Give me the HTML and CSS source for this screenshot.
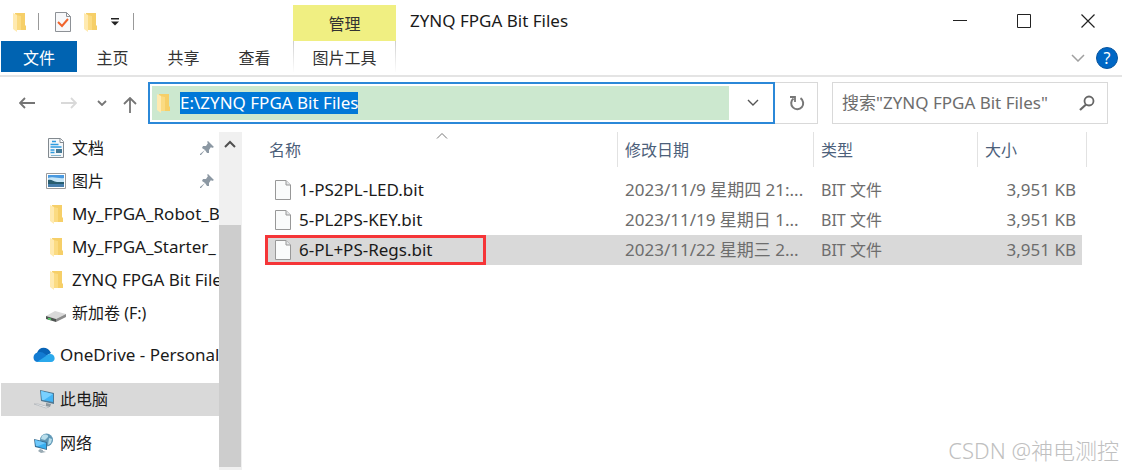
FILE: index.html
```html
<!DOCTYPE html>
<html lang="zh-CN">
<head>
    <meta charset="UTF-8">
    <meta name="viewport" content="width=device-width, initial-scale=1.0">
    <title>ZYNQ FPGA Bit Files</title>
    <link rel="stylesheet" href="styles.css">
</head>
<body>

<!-- Shared icons -->
<svg class="icon-defs" width="0" height="0" aria-hidden="true">
    <symbol id="icon-folder" viewBox="0 0 14 20">
        <path d="M3 1h10v12l1 1v4H4z" fill="#f6cf68"/>
        <path d="M4 18V3l5 1v14z" fill="#fbdb82"/>
        <path d="M1 1l4 2v17l-4-3z" fill="#ffeab0"/>
    </symbol>
    <symbol id="icon-file" viewBox="0 0 16 20">
        <path d="M.5.5h10.500l4.500 4.500v14.500H.5z" fill="#fafbfb" stroke="#989898"/>
        <path d="M11 .5v4.500h4.500" fill="#e4e6e8" stroke="#989898"/>
    </symbol>
    <symbol id="icon-pin" viewBox="0 0 14 14">
        <path d="M8 0l6 6-2 1-1-1-2 3v3l-2 0-2-3-4 5-1 0 0-1 5-4-3-2 1-2h3l2-3-1-1z" fill="#8c98a3"/>
    </symbol>
    <symbol id="icon-down" viewBox="0 0 14 8">
        <path d="M1 1l6 6 6-6" fill="none" stroke="currentColor" stroke-width="1.5"/>
    </symbol>
</svg>

<div class="window">
    <header class="ribbon">
        <div class="ribbon-left">
            <div class="quick-access">
                <svg class="folder" aria-hidden="true"><use href="#icon-folder"/></svg>
                <span class="divider"></span>
                <button class="icon-btn check" aria-label="属性">
                    <svg width="16" height="20" viewBox="0 0 16 20"><path d="M.5.5h11l4 4v15H.5z" fill="#f7f8fa" stroke="#8d9196"/><path d="M11.500.5v4h4" fill="none" stroke="#8d9196"/><path d="M3 10l4 4 6-7" fill="none" stroke="#f0642c" stroke-width="2"/></svg>
                </button>
                <button class="icon-btn" aria-label="新建文件夹">
                    <svg class="folder"><use href="#icon-folder"/></svg>
                </button>
                <button class="icon-btn customize" aria-label="自定义快速访问工具栏">
                    <svg width="8" height="8" viewBox="0 0 8 8"><path d="M0 0h8v1.500H0zM0 3.500h8L4 7.500z" fill="#222"/></svg>
                </button>
                <span class="divider"></span>
            </div>
            <nav class="tabs">
                <button class="tab file">文件</button>
                <button class="tab">主页</button>
                <button class="tab">共享</button>
                <button class="tab">查看</button>
            </nav>
        </div>

        <div class="context-tab">
            <div class="context-title">管理</div>
            <button class="tab">图片工具</button>
        </div>

        <div class="ribbon-right">
            <div class="title-row">
                <h1>ZYNQ FPGA Bit Files</h1>
                <div class="window-buttons">
                    <button class="icon-btn" aria-label="最小化"><svg width="14" height="14" viewBox="0 0 14 14"><path d="M0 6.500h14" stroke="#222"/></svg></button>
                    <button class="icon-btn" aria-label="最大化"><svg width="14" height="14" viewBox="0 0 14 14"><path d="M.5.5h13v13H.5z" fill="none" stroke="#222"/></svg></button>
                    <button class="icon-btn" aria-label="关闭"><svg width="14" height="14" viewBox="0 0 14 14"><path d="M.5.5l13 13M13.500.5l-13 13" stroke="#222" stroke-width="1.200"/></svg></button>
                </div>
            </div>
            <div class="help-row">
                <button class="icon-btn expand" aria-label="展开功能区"><svg width="14" height="8"><use href="#icon-down"/></svg></button>
                <button class="help" aria-label="帮助">?</button>
            </div>
        </div>
    </header>

    <!-- Navigation and address bar -->
    <div class="toolbar">
        <div class="history">
            <button class="icon-btn" aria-label="返回"><svg width="16" height="12" viewBox="0 0 16 12"><path d="M16 6H1M6 1L1 6l5 5" fill="none" stroke="#757575" stroke-width="1.800"/></svg></button>
            <button class="icon-btn forward" aria-label="前进"><svg width="16" height="12" viewBox="0 0 16 12"><path d="M0 6h15M10 1l5 5-5 5" fill="none" stroke="#d9d9d9" stroke-width="1.800"/></svg></button>
            <button class="icon-btn recent" aria-label="最近位置"><svg width="10" height="6" viewBox="0 0 10 6"><path d="M1 1l4 4 4-4" fill="none" stroke="#757575" stroke-width="1.800"/></svg></button>
            <button class="icon-btn up" aria-label="向上"><svg width="14" height="16" viewBox="0 0 14 16"><path d="M7 16V1M1 7l6-6 6 6" fill="none" stroke="#757575" stroke-width="1.800"/></svg></button>
        </div>
        <div class="address">
            <div class="address-field">
                <svg class="folder" aria-hidden="true"><use href="#icon-folder"/></svg>
                <input type="text" id="path" aria-label="地址" value="E:\ZYNQ FPGA Bit Files" spellcheck="false">
            </div>
            <button class="icon-btn dropdown" aria-label="以前的位置"><svg width="12" height="8" viewBox="0 0 12 8"><path d="M1 1l5 5 5-5" fill="none" stroke="#555" stroke-width="1.400"/></svg></button>
        </div>
        <button class="icon-btn refresh" aria-label="刷新">
            <svg width="18" height="18" viewBox="0 0 18 18"><path d="M12.500 4.200a6 6 0 1 1-7 .3" fill="none" stroke="#777" stroke-width="2"/><path d="M2 3h5v5" fill="none" stroke="#777" stroke-width="1.800"/></svg>
        </button>
        <div class="search">
            <input type="text" aria-label="搜索" placeholder='搜索"ZYNQ FPGA Bit Files"'>
            <button class="icon-btn" aria-label="开始搜索"><svg width="16" height="16" viewBox="0 0 16 16"><circle cx="10" cy="6" r="4.500" fill="none" stroke="#666" stroke-width="1.800"/><path d="M7 9.500L1 15" stroke="#666" stroke-width="2.200"/></svg></button>
        </div>
    </div>

    <main class="content">
        <nav class="sidebar">
            <ul>
                <li><a href="#">
                    <svg width="16" height="20" viewBox="0 0 16 20"><path d="M.5.500h12l3 3v16H.5z" fill="#f4f7f9" stroke="#82898f"/><path d="M12 .5v4h4" fill="#fff" stroke="#82898f"/><path d="M4 3.500h4M2.500 6.500h8M2.500 9h11M2.500 12h4M2.500 14.500h4" stroke="#2d9be0" stroke-width="1.500"/><path d="M8 11h6v4H8z" fill="#447996"/><path d="M3 17.500h10" stroke="#83b5d1"/></svg>
                    <span>文档</span>
                    <svg class="pin" width="14" height="14"><use href="#icon-pin"/></svg>
                </a></li>
                <li><a href="#">
                    <svg width="20" height="16" viewBox="0 0 20 16"><path d="M.5.500h19v15H.5z" fill="#fff" stroke="#9a9a9a"/><path d="M2 2h16v12H2z" fill="#4a9ae0"/><path d="M2 5c5-2 11 1 16 0v6H2z" fill="#c7e6f7"/><path d="M2 7c4-1 5 2 9 2l7 0v3H2z" fill="#285d70"/><path d="M2 11h16v3H2z" fill="#477eac"/></svg>
                    <span>图片</span>
                    <svg class="pin" width="14" height="14"><use href="#icon-pin"/></svg>
                </a></li>
                <li><a href="#"><svg class="folder"><use href="#icon-folder"/></svg><span class="latin">My_FPGA_Robot_B</span></a></li>
                <li><a href="#"><svg class="folder"><use href="#icon-folder"/></svg><span class="latin">My_FPGA_Starter_</span></a></li>
                <li><a href="#"><svg class="folder"><use href="#icon-folder"/></svg><span class="latin">ZYNQ FPGA Bit File</span></a></li>
                <li><a href="#">
                    <svg width="20" height="20" viewBox="0 0 20 20"><path d="M0 13l9-5 11 3-10 5z" fill="#d9d9d9"/><path d="M0 13l10 3v3L0 16z" fill="#4e5350"/><path d="M10 16l10-5v3l-10 5z" fill="#8b8b8b"/><path d="M2 15.500l3 1" stroke="#55d36b" stroke-width="1.500"/></svg>
                    <span>新加卷 (F:)</span>
                </a></li>
            </ul>
            <ul class="roots">
                <li><a href="#">
                    <svg width="22" height="16" viewBox="0 0 22 16"><path d="M4 6C6-1 15-1 18 6L9 11z" fill="#0864b7"/><path d="M5 15C-1 15-1 6 5 5.500c3-1 5 0 7 1.500l6 5-8 3z" fill="#127bd2"/><path d="M4 15l9-6c1-1 2-2 4-2 6 0 6 8 1 8z" fill="#2ba9ec"/></svg>
                    <span class="latin">OneDrive - Personal</span>
                </a></li>
                <li class="current"><a href="#">
                    <svg width="22" height="20" viewBox="0 0 22 20"><path d="M7 1l14 3v11L8 12z" fill="#4f7893"/><path d="M8 2l12 3v8L9 11z" fill="#43b4f5"/><path d="M8 2l12 3-9 6H9z" fill="#79d0ff"/><path d="M13 14l5 1-1 3-4-1z" fill="#8d989f"/><path d="M1 15l12 4 3-1-11-3z" fill="#eceff1" stroke="#a8adb1" stroke-width=".6"/></svg>
                    <span>此电脑</span>
                </a></li>
                <li><a href="#">
                    <svg width="22" height="20" viewBox="0 0 22 20"><circle cx="13.500" cy="7" r="6.500" fill="#6098b6"/><path d="M9 3c3-3 7-1 6 1l-3 3-4-1zM16 5l3 1-1 4-3 2z" fill="#b9deeb"/><path d="M1 6l13 3v8L2 14z" fill="#3c7195"/><path d="M2 7l11 3v6L3 13z" fill="#38aeef"/><path d="M2 7l11 3-8 3H3z" fill="#70c9fb"/><path d="M7 16l3 1v1l3 1-5 1-3-2z" fill="#9aabb4"/></svg>
                    <span>网络</span>
                </a></li>
            </ul>
        </nav>
        <div class="scrollbar" aria-hidden="true">
            <svg width="12" height="8" viewBox="0 0 12 8"><path d="M1 7l5-5 5 5" fill="none" stroke="#505050" stroke-width="2"/></svg>
            <div class="thumb"></div>
        </div>

        <section class="files">
            <table>
                <colgroup>
                    <col>
                    <col class="col-date">
                    <col class="col-type">
                    <col class="col-size">
                </colgroup>
                <thead>
                    <tr>
                        <th class="sorted"><div>名称</div><svg width="12" height="6" viewBox="0 0 12 6"><path d="M1 5.500l5-5 5 5" fill="none" stroke="#777"/></svg></th>
                        <th><div>修改日期</div></th>
                        <th><div>类型</div></th>
                        <th><div>大小</div></th>
                    </tr>
                </thead>
                <tbody>
                    <tr>
                        <td><div class="name"><svg width="16" height="20"><use href="#icon-file"/></svg>1-PS2PL-LED.bit</div></td>
                        <td class="latin">2023/11/9 星期四 21:...</td>
                        <td>BIT 文件</td>
                        <td class="size">3,951 KB</td>
                    </tr>
                    <tr>
                        <td><div class="name"><svg width="16" height="20"><use href="#icon-file"/></svg>5-PL2PS-KEY.bit</div></td>
                        <td class="latin">2023/11/19 星期日 1...</td>
                        <td>BIT 文件</td>
                        <td class="size">3,951 KB</td>
                    </tr>
                    <tr class="selected">
                        <td><div class="name marked"><svg width="16" height="20"><use href="#icon-file"/></svg>6-PL+PS-Regs.bit</div></td>
                        <td class="latin">2023/11/22 星期三 2...</td>
                        <td>BIT 文件</td>
                        <td class="size">3,951 KB</td>
                    </tr>
                </tbody>
            </table>
        </section>
    </main>

    <div class="watermark">CSDN @神电测控</div>
</div>

<script>
    // Open with the whole path selected
    const path = document.getElementById('path');
    path.focus();
    path.select();
</script>

</body>
</html>
```
FILE: styles.css
```css
* {
    box-sizing: border-box;
}

body {
    margin: 0;
    background-color: #fff;
    color: #1a1a1a;
    font-family: 'Noto Sans', 'Noto Sans CJK SC', sans-serif;
    font-size: 16px;
    line-height: 22px;
}

button,
input {
    font: inherit;
    color: inherit;
    border: none;
    background: none;
    padding: 0;
    margin: 0;
}

svg {
    display: block;
    flex-shrink: 0;
}

ul {
    list-style: none;
    margin: 0;
    padding: 0;
}

.latin {
    font-size: 17px;
}

.icon-defs {
    position: absolute;
}

.window {
    position: relative;
    display: flex;
    flex-direction: column;
    min-height: 100vh;
    overflow: hidden;
}

.folder {
    width: 14px;
    height: 20px;
}

.icon-btn {
    display: flex;
    align-items: center;
    justify-content: center;
}

/* Ribbon */
.ribbon {
    display: flex;
    height: 77px;
    padding-left: 1px;
    border-bottom: 2px solid #e4e4e4;
}

.ribbon-left {
    width: 292px;
}

.quick-access {
    display: flex;
    align-items: center;
    height: 41px;
    padding: 2px 0 0 11px;
}

.divider {
    width: 1px;
    height: 17px;
    margin-left: 12px;
    background-color: #999;
}

.check {
    margin: 0 12px 0 16px;
}

.customize {
    margin: 0 2px 0 14px;
}

.tabs {
    display: flex;
    padding-right: 3px;
}

.tab {
    flex: 1;
    height: 31px;
    padding-top: 2px;
    color: #333;
}

.tab.file {
    flex: 0 0 76px;
    background-color: #0063b1;
    color: #fff;
}

.context-tab {
    display: flex;
    flex-direction: column;
    width: 103px;
    padding-top: 5px;
}

.context-title {
    height: 36px;
    padding-top: 8px;
    background-color: #f0ef82;
    text-align: center;
    color: #333;
}

.context-tab .tab {
    flex: none;
    border: solid transparent;
    border-width: 0 1px;
    border-image: linear-gradient(#ccc, #fff) 1;
}

.ribbon-right {
    flex: 1;
}

.title-row {
    display: flex;
    justify-content: space-between;
    height: 41px;
    padding-left: 14px;
}

h1 {
    margin: 10px 0 0;
    font-size: 17px;
    font-weight: normal;
}

.window-buttons {
    display: flex;
    padding-right: 2px;
}

.window-buttons .icon-btn {
    width: 64px;
}

.help-row {
    display: flex;
    align-items: center;
    justify-content: flex-end;
    gap: 11px;
    height: 34px;
    padding-right: 4px;
}

.expand {
    color: #a0a0a0;
}

.help {
    width: 22px;
    height: 22px;
    border-radius: 50%;
    border: 1px solid #0755a0;
    background-color: #0067c5;
    color: #fff;
    line-height: 20px;
}

/* Toolbar */
.toolbar {
    display: flex;
    height: 55px;
    padding: 5px 14px 8px 19px;
}

.history {
    display: flex;
    align-items: center;
    width: 129px;
}

.forward {
    margin-left: 26px;
}

.recent {
    margin: 0 16px 0 20px;
}

.up {
    padding-top: 4px;
}

.address {
    display: flex;
    flex: 1;
    border: 2px solid #2b88d8;
    padding: 2px;
}

.address-field {
    display: flex;
    flex: 1;
    align-items: center;
    gap: 10px;
    padding-left: 4px;
    background-color: #cce8cf;
}

.address-field input {
    flex: 1;
    height: 22px;
    font-size: 17px;
    outline: none;
}

.address-field input::selection {
    background-color: #0078d7;
    color: #fff;
}

.dropdown {
    width: 42px;
    padding-left: 6px;
}

.refresh {
    width: 43px;
    padding-left: 2px;
    border: 1px solid #d9d9d9;
    border-left: none;
}

.search {
    display: flex;
    width: 276px;
    margin-left: 14px;
    padding: 0 12px 0 9px;
    border: 1px solid #d9d9d9;
}

.search input {
    flex: 1;
    min-width: 0;
    font-size: 17px;
    outline: none;
}

.search input::placeholder {
    color: #6d6d6d;
    opacity: 1;
}

/* Sidebar */
.content {
    display: flex;
    flex: 1;
}

.sidebar {
    width: 219px;
    padding-left: 1px;
    overflow: hidden;
}

.sidebar a {
    display: flex;
    align-items: center;
    gap: 6px;
    height: 33px;
    padding: 0 0 2px 45px;
    color: #1a1a1a;
    text-decoration: none;
    white-space: nowrap;
}

.sidebar a > svg:first-child {
    width: 20px;
}

.sidebar .pin {
    margin: 0 5px 0 auto;
}

.roots {
    display: flex;
    flex-direction: column;
    gap: 11px;
    padding-top: 9px;
}

.roots a {
    gap: 5px;
    padding-left: 32px;
}

.roots a > svg:first-child {
    width: 22px;
}

.current {
    background-color: #d9d9d9;
}

.scrollbar {
    display: flex;
    flex-direction: column;
    align-items: center;
    width: 23px;
    padding: 8px 1px 3px 0;
    background-color: #f0f0f0;
}

.thumb {
    flex: 1;
    width: 100%;
    margin-top: 77px;
    background-color: #cdcdcd;
}

/* File list */
.files {
    flex: 1;
    padding: 0 35px 0 23px;
}

table {
    width: 100%;
    table-layout: fixed;
    border-collapse: separate;
    border-spacing: 0;
}

.col-date {
    width: 196px;
}

.col-type {
    width: 164px;
}

.col-size {
    width: 109px;
}

th {
    position: relative;
    padding: 0 0 8px;
    font-weight: normal;
    text-align: left;
    color: #4c607a;
}

th div {
    height: 35px;
    padding: 7px 0 0 7px;
    border-right: 1px solid #e2e2e2;
}

.sorted div {
    padding-left: 4px;
}

/* Sort arrow sits over the top edge of the heading */
.sorted svg {
    position: absolute;
    top: 1px;
    left: 50%;
    transform: translateX(-50%);
}

td {
    height: 30px;
    padding: 0 0 0 7px;
    color: #6d6d6d;
    white-space: nowrap;
}

td:first-child {
    padding: 0;
}

td.size {
    padding-right: 6px;
    border-right: 5px solid transparent;
    background-clip: padding-box;
    font-size: 17px;
    text-align: right;
}

.name {
    display: flex;
    align-items: center;
    gap: 8px;
    width: 221px;
    height: 30px;
    padding-left: 10px;
    color: #1a1a1a;
    font-size: 17px;
}

.marked {
    outline: 3px solid #f53538;
    outline-offset: -3px;
}

.selected td {
    background-color: #d9d9d9;
}

.watermark {
    position: absolute;
    right: 3px;
    bottom: 6px;
    color: #c0c0c0;
    font-size: 22px;
    font-weight: 300;
    line-height: 28px;
    pointer-events: none;
}
```
